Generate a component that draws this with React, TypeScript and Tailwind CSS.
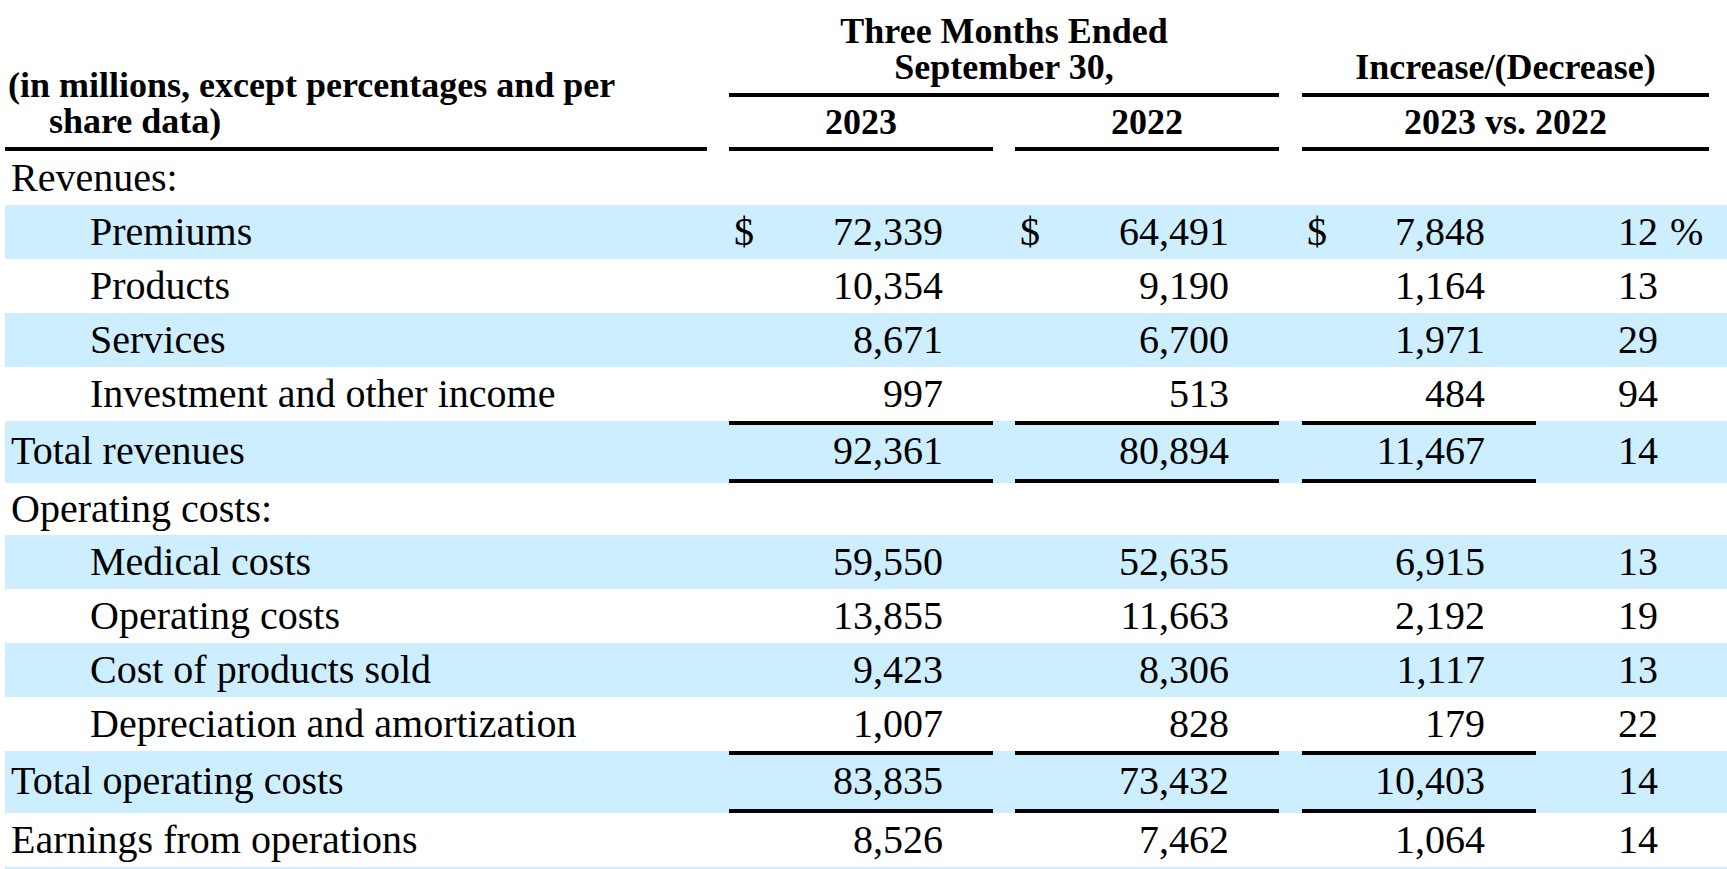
import clsx from "clsx";

interface Line {
  label: string;
  indent?: boolean;
  band?: boolean;
  total?: boolean;
  short?: boolean;
  dollar?: boolean;
  a?: string;
  b?: string;
  c?: string;
  pct?: string;
}

const lines: Line[] = [
  { label: "Revenues:" },
  { label: "Premiums", indent: true, band: true, dollar: true, a: "72,339", b: "64,491", c: "7,848", pct: "12" },
  { label: "Products", indent: true, a: "10,354", b: "9,190", c: "1,164", pct: "13" },
  { label: "Services", indent: true, band: true, a: "8,671", b: "6,700", c: "1,971", pct: "29" },
  { label: "Investment and other income", indent: true, a: "997", b: "513", c: "484", pct: "94" },
  { label: "Total revenues", band: true, total: true, a: "92,361", b: "80,894", c: "11,467", pct: "14" },
  { label: "Operating costs:", short: true },
  { label: "Medical costs", indent: true, band: true, a: "59,550", b: "52,635", c: "6,915", pct: "13" },
  { label: "Operating costs", indent: true, a: "13,855", b: "11,663", c: "2,192", pct: "19" },
  { label: "Cost of products sold", indent: true, band: true, a: "9,423", b: "8,306", c: "1,117", pct: "13" },
  { label: "Depreciation and amortization", indent: true, a: "1,007", b: "828", c: "179", pct: "22" },
  { label: "Total operating costs", band: true, total: true, a: "83,835", b: "73,432", c: "10,403", pct: "14" },
  { label: "Earnings from operations", a: "8,526", b: "7,462", c: "1,064", pct: "14" },
  { label: "", band: true },
];

function Amount({
  value,
  dollar,
  total,
  className,
  tail,
}: {
  value?: string;
  dollar?: boolean;
  total?: boolean;
  className: string;
  tail: string;
}) {
  return (
    <div className={clsx("flex h-full shrink-0 items-center", className, total && "border-y-4 border-black pb-[3px]")}>
      <span className="shrink-0 pl-[5px]">{dollar ? "$" : ""}</span>
      <span className="flex-1 text-right">{value}</span>
      <span className={clsx("shrink-0", tail)} />
    </div>
  );
}

function BodyRow({ line }: { line: Line }) {
  const height = line.total ? "h-[62px]" : line.short ? "h-[52px]" : "h-[54px]";
  return (
    <div className={clsx("flex text-[40px] leading-[44px]", height, line.band && "bg-[#cceeff]")}>
      <div
        className={clsx(
          "flex h-full w-[702px] shrink-0 items-center whitespace-nowrap",
          line.indent ? "pl-[85px]" : "pl-[6px]",
          line.total && "pb-[3px]"
        )}
      >
        {line.label}
      </div>
      <Amount className="ml-[22px] w-[264px]" tail="w-[50px]" value={line.a} dollar={line.dollar} total={line.total} />
      <Amount className="ml-[22px] w-[264px]" tail="w-[50px]" value={line.b} dollar={line.dollar} total={line.total} />
      <Amount className="ml-[23px] w-[234px]" tail="w-[51px]" value={line.c} dollar={line.dollar} total={line.total} />
      <div className={clsx("flex h-full w-[173px] shrink-0 items-center", line.total && "pb-[3px]")}>
        <span className="w-[122px] shrink-0 text-right">{line.pct}</span>
        <span className="pl-[12px]">{line.dollar ? "%" : ""}</span>
      </div>
    </div>
  );
}

function HeaderRow() {
  return (
    <div className="flex items-end text-[36px] font-bold leading-[36px]">
      <div className="w-[702px] shrink-0 border-b-4 border-black pb-[8px]">
        <p className="whitespace-nowrap pl-[44px] -indent-[41px]">
          (in millions, except percentages and per
          <br />
          share data)
        </p>
      </div>
      <div className="ml-[22px] w-[550px] shrink-0">
        <div className="border-b-4 border-black pb-[8px] pt-[13px] text-center">
          Three Months Ended
          <br />
          September 30,
        </div>
        <div className="flex gap-[22px]">
          <div className="w-[264px] border-b-4 border-black py-[7px] text-center">2023</div>
          <div className="w-[264px] border-b-4 border-black py-[7px] text-center">2022</div>
        </div>
      </div>
      <div className="ml-[23px] w-[407px] shrink-0">
        <div className="border-b-4 border-black pb-[8px] text-center">Increase/(Decrease)</div>
        <div className="border-b-4 border-black py-[7px] text-center">2023 vs. 2022</div>
      </div>
    </div>
  );
}

export default function App() {
  return (
    <div className="h-[869px] overflow-hidden bg-white font-['Liberation_Serif','Times_New_Roman',serif] text-black">
      <div className="ml-[5px]">
        <HeaderRow />
        {lines.map((line, i) => (
          <BodyRow key={i} line={line} />
        ))}
      </div>
    </div>
  );
}
